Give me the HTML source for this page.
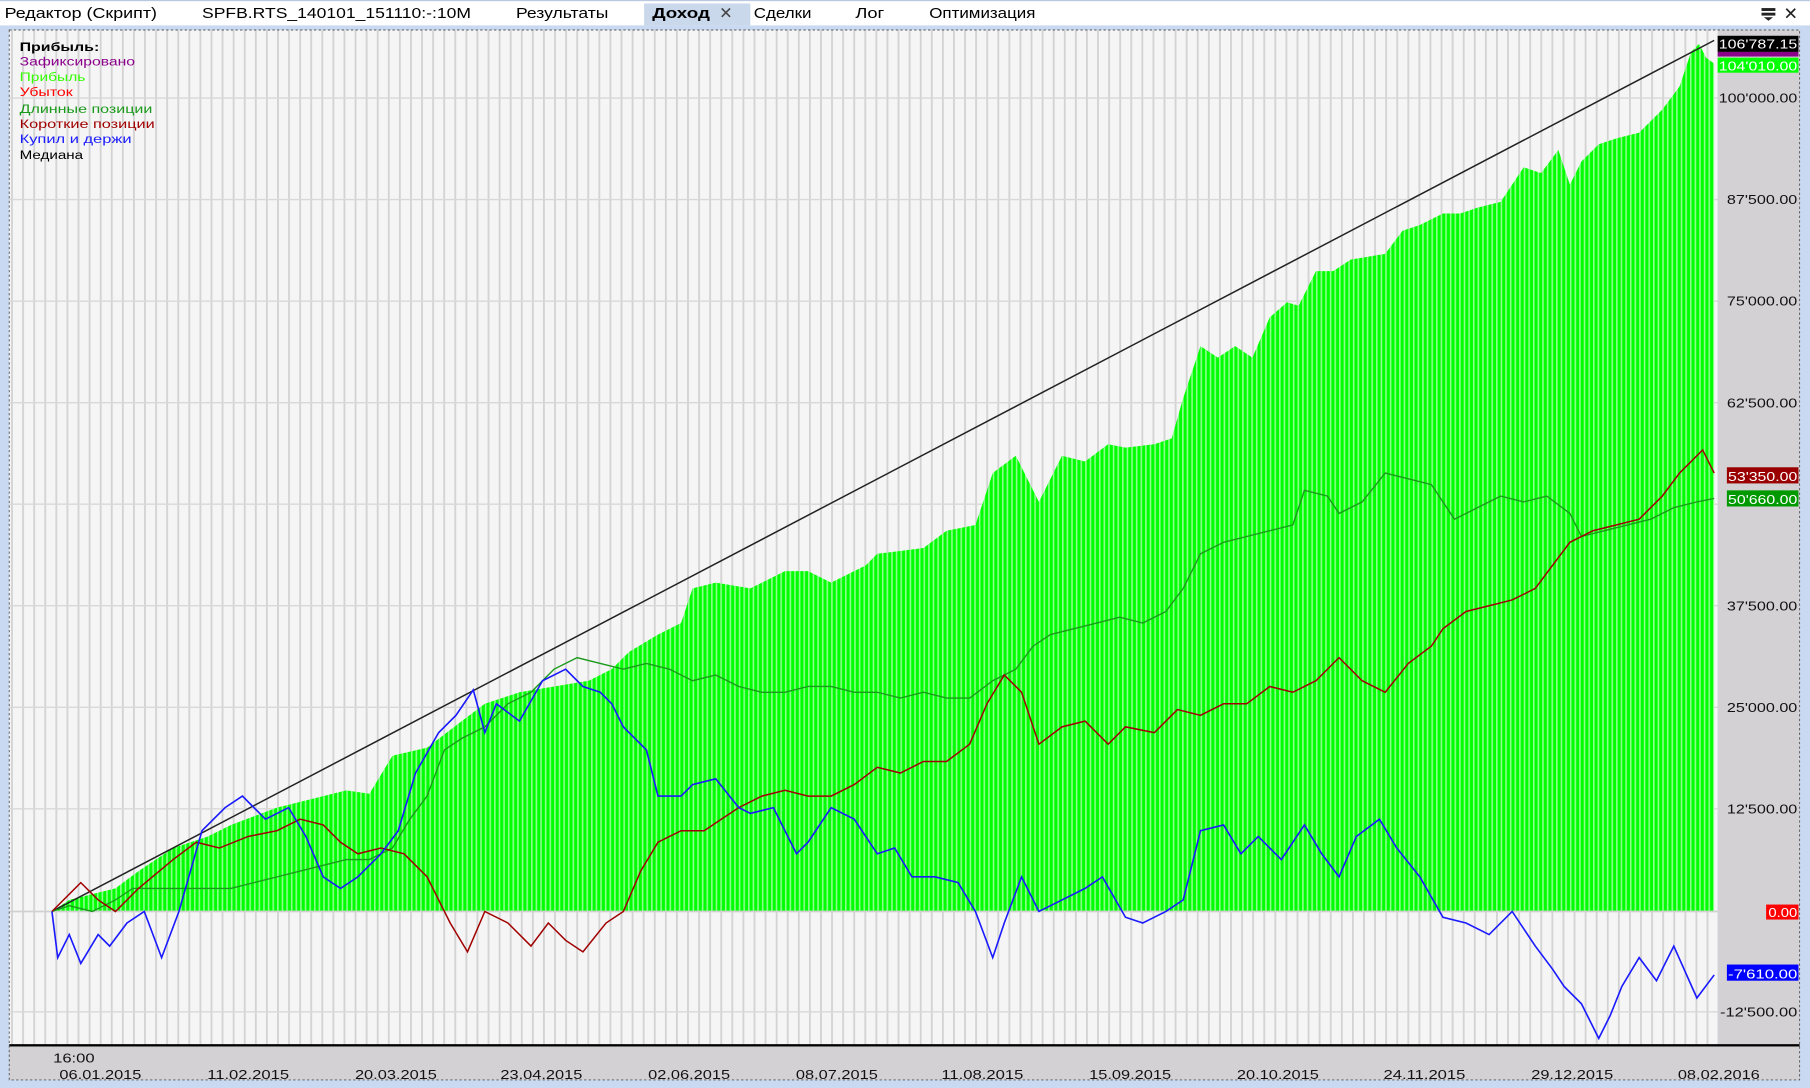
<!DOCTYPE html>
<html><head><meta charset="utf-8"><style>
html,body{margin:0;padding:0;width:1810px;height:1088px;overflow:hidden;background:#c9d9f1}
svg{display:block}
</style></head><body>
<svg width="1810" height="1088" viewBox="0 0 1568 943" preserveAspectRatio="none" xmlns="http://www.w3.org/2000/svg" font-family="Liberation Sans, DejaVu Sans, sans-serif">
<defs>
<pattern id="vg" x="0" y="0" width="9.6" height="10" patternUnits="userSpaceOnUse">
<rect x="0" y="0" width="1.6" height="10" fill="#d3d3d3"/>
</pattern>
<pattern id="gb" x="0" y="0" width="4" height="10" patternUnits="userSpaceOnUse">
<rect width="4" height="10" fill="#00ff00"/>
<rect x="0" width="1.4" height="10" fill="#8cff8c"/>
</pattern>
</defs>
<rect x="0" y="0" width="1568" height="943" fill="#c9d9f1"/>
<rect x="0" y="0" width="1568" height="22" fill="#ffffff"/>
<rect x="0" y="0" width="1568" height="1" fill="#b8c8e0"/>
<rect x="558" y="3" width="92" height="19" fill="#cad8ec"/>
<g font-size="13" fill="#000" lengthAdjust="spacingAndGlyphs">
<text x="4" y="15.5" textLength="132" lengthAdjust="spacingAndGlyphs">Редактор (Скрипт)</text>
<text x="175" y="15.5" textLength="233" lengthAdjust="spacingAndGlyphs">SPFB.RTS_140101_151110:-:10M</text>
<text x="447" y="15.5" textLength="80" lengthAdjust="spacingAndGlyphs">Результаты</text>
<text x="565" y="15.5" font-weight="bold" textLength="50" lengthAdjust="spacingAndGlyphs">Доход</text>
<text x="623" y="16" fill="#444" font-size="14">✕</text>
<text x="653" y="15.5" textLength="50" lengthAdjust="spacingAndGlyphs">Сделки</text>
<text x="741" y="15.5" textLength="25" lengthAdjust="spacingAndGlyphs">Лог</text>
<text x="805" y="15.5" textLength="92" lengthAdjust="spacingAndGlyphs">Оптимизация</text>
</g>
<g fill="#222">
<rect x="1526" y="7" width="12" height="2.5"/><rect x="1526" y="11" width="12" height="2.5"/>
<path d="M1528 15 L1536 15 L1532 18 Z"/>
</g>
<text x="1545" y="17" font-size="15" fill="#222">✕</text>
<rect x="8" y="26" width="1480" height="880" fill="#f5f5f5"/>
<rect x="8" y="26" width="1480" height="880" fill="url(#vg)"/>
<g stroke="#d8d8d8" stroke-width="1.2">
<line x1="8" y1="85" x2="1488" y2="85"/><line x1="8" y1="173" x2="1488" y2="173"/>
<line x1="8" y1="261" x2="1488" y2="261"/><line x1="8" y1="349" x2="1488" y2="349"/>
<line x1="8" y1="437" x2="1488" y2="437"/><line x1="8" y1="525" x2="1488" y2="525"/>
<line x1="8" y1="613" x2="1488" y2="613"/><line x1="8" y1="701" x2="1488" y2="701"/>
<line x1="8" y1="877" x2="1488" y2="877"/>
</g>
<polygon fill="url(#gb)" points="45,790 60,780 80,775 100,770 120,755 150,735 180,725 200,715 240,700 260,695 280,690 300,685 320,688 340,655 370,648 400,625 420,610 450,600 480,595 510,590 530,580 545,565 570,550 590,540 600,510 620,505 650,510 680,495 700,495 720,505 750,490 760,480 800,475 820,460 845,455 860,410 880,395 900,435 920,395 940,400 960,385 975,388 1000,385 1015,380 1025,345 1040,300 1055,310 1070,300 1085,310 1100,275 1115,262 1125,265 1140,235 1155,235 1170,225 1200,220 1215,200 1230,195 1250,185 1265,185 1280,180 1300,175 1320,145 1335,150 1350,130 1360,160 1370,140 1385,125 1400,120 1420,115 1430,105 1440,95 1455,75 1465,45 1472,38 1478,50 1485,55 1485,790"/>
<line x1="8" y1="790" x2="1488" y2="790" stroke="#d0d0d0" stroke-width="1.5"/>
<line x1="45" y1="790" x2="1485" y2="35" stroke="#222" stroke-width="1.3"/>
<polyline fill="none" stroke="#1a9a1a" stroke-width="1.2" points="45,790 60,785 80,790 100,780 115,770 150,770 200,770 220,765 240,760 260,755 280,750 300,745 320,745 340,735 355,710 370,690 385,650 400,640 420,630 440,610 460,600 480,580 500,570 520,575 540,580 560,575 580,580 600,590 620,585 640,595 660,600 680,600 700,595 720,595 740,600 760,600 780,605 800,600 820,605 840,605 860,590 880,580 895,560 910,550 930,545 950,540 970,535 990,540 1010,530 1025,510 1040,480 1060,470 1080,465 1100,460 1120,455 1130,425 1150,430 1160,445 1180,435 1200,410 1220,415 1240,420 1260,450 1280,440 1300,430 1320,435 1340,430 1360,445 1370,465 1390,460 1410,455 1430,450 1450,440 1470,435 1485,432"/>
<polyline fill="none" stroke="#a00000" stroke-width="1.3" points="45,790 70,765 85,780 100,790 120,770 150,745 170,730 190,735 215,725 240,720 260,710 280,715 295,730 310,740 330,735 350,740 370,760 390,800 405,825 420,790 440,800 460,820 475,800 490,815 505,825 525,800 540,790 555,755 570,730 590,720 610,720 625,710 640,700 660,690 680,685 700,690 720,690 740,680 760,665 780,670 800,660 820,660 840,645 855,610 870,585 885,600 900,645 920,630 940,625 960,645 975,630 1000,635 1020,615 1040,620 1060,610 1080,610 1100,595 1120,600 1140,590 1160,570 1180,590 1200,600 1220,575 1240,560 1250,545 1270,530 1290,525 1310,520 1330,510 1345,490 1360,470 1380,460 1400,455 1420,450 1440,430 1455,410 1475,390 1485,410"/>
<polyline fill="none" stroke="#1a1aff" stroke-width="1.4" points="45,790 50,830 60,810 70,835 85,810 95,820 110,800 125,790 140,830 155,790 175,720 195,700 210,690 230,710 250,700 265,725 280,760 295,770 310,760 330,740 345,720 360,670 380,635 395,620 410,598 420,635 430,610 450,625 470,590 490,580 505,595 520,600 530,610 540,630 560,650 570,690 590,690 600,680 620,675 640,700 650,705 670,700 690,740 700,730 720,700 740,710 760,740 775,735 790,760 810,760 830,765 845,790 860,830 870,800 885,760 900,790 920,780 940,770 955,760 975,795 990,800 1010,790 1025,780 1040,720 1060,715 1075,740 1090,725 1110,745 1130,715 1145,740 1160,760 1175,725 1195,710 1210,735 1230,760 1250,795 1270,800 1290,810 1310,790 1330,820 1345,840 1355,855 1370,870 1385,900 1395,880 1405,855 1420,830 1435,850 1450,820 1470,865 1485,845"/>
<g font-size="10">
<text x="17" y="44" font-weight="bold" fill="#000" textLength="69" lengthAdjust="spacingAndGlyphs">Прибыль:</text>
<text x="17" y="57" fill="#8b008b" textLength="100" lengthAdjust="spacingAndGlyphs">Зафиксировано</text>
<text x="17" y="70" fill="#33ff00" textLength="57" lengthAdjust="spacingAndGlyphs">Прибыль</text>
<text x="17" y="83" fill="#ff0000" textLength="46" lengthAdjust="spacingAndGlyphs">Убыток</text>
<text x="17" y="98" fill="#1a9a1a" textLength="115" lengthAdjust="spacingAndGlyphs">Длинные позиции</text>
<text x="17" y="111" fill="#a00000" textLength="117" lengthAdjust="spacingAndGlyphs">Короткие позиции</text>
<text x="17" y="124" fill="#1a1aff" textLength="97" lengthAdjust="spacingAndGlyphs">Купил и держи</text>
<text x="17" y="138" fill="#000" textLength="55" lengthAdjust="spacingAndGlyphs">Медиана</text>
</g>
<rect x="1488" y="26" width="71" height="880" fill="#d4d1d4"/>
<g font-size="11" fill="#111">
<text x="1489" y="89" textLength="68" lengthAdjust="spacingAndGlyphs">100'000.00</text>
<text x="1496" y="177" textLength="61" lengthAdjust="spacingAndGlyphs">87'500.00</text>
<text x="1496" y="265" textLength="61" lengthAdjust="spacingAndGlyphs">75'000.00</text>
<text x="1496" y="353" textLength="61" lengthAdjust="spacingAndGlyphs">62'500.00</text>
<text x="1496" y="529" textLength="61" lengthAdjust="spacingAndGlyphs">37'500.00</text>
<text x="1496" y="617" textLength="61" lengthAdjust="spacingAndGlyphs">25'000.00</text>
<text x="1496" y="705" textLength="61" lengthAdjust="spacingAndGlyphs">12'500.00</text>
<text x="1490" y="881" textLength="67" lengthAdjust="spacingAndGlyphs">-12'500.00</text>
</g>
<rect x="1488" y="31" width="70" height="14" fill="#000"/>
<rect x="1488" y="45" width="70" height="4" fill="#8b008b"/>
<rect x="1488" y="50" width="70" height="13" fill="#00ff00"/>
<rect x="1496" y="405" width="62" height="14" fill="#9a0000"/>
<rect x="1496" y="425" width="62" height="14" fill="#009a00"/>
<rect x="1530" y="784" width="28" height="13" fill="#ff0000"/>
<rect x="1496" y="836" width="62" height="14" fill="#0000ff"/>
<g font-size="11" fill="#fff">
<text x="1489" y="42" textLength="68" lengthAdjust="spacingAndGlyphs">106'787.15</text>
<text x="1489" y="61" textLength="68" lengthAdjust="spacingAndGlyphs">104'010.00</text>
<text x="1497" y="417" textLength="60" lengthAdjust="spacingAndGlyphs">53'350.00</text>
<text x="1497" y="437" textLength="60" lengthAdjust="spacingAndGlyphs">50'660.00</text>
<text x="1532" y="795" textLength="25" lengthAdjust="spacingAndGlyphs">0.00</text>
<text x="1497" y="848" textLength="60" lengthAdjust="spacingAndGlyphs">-7'610.00</text>
</g>
<rect x="8" y="906" width="1551" height="30" fill="#d4d1d4"/>
<rect x="8" y="905" width="1551" height="2" fill="#000"/>
<g font-size="11" fill="#111" text-anchor="middle">
<text x="64" y="921" textLength="36" lengthAdjust="spacingAndGlyphs">16:00</text>
<text x="87" y="935" textLength="71" lengthAdjust="spacingAndGlyphs">06.01.2015</text>
<text x="215" y="935" textLength="71" lengthAdjust="spacingAndGlyphs">11.02.2015</text>
<text x="343" y="935" textLength="71" lengthAdjust="spacingAndGlyphs">20.03.2015</text>
<text x="469" y="935" textLength="71" lengthAdjust="spacingAndGlyphs">23.04.2015</text>
<text x="597" y="935" textLength="71" lengthAdjust="spacingAndGlyphs">02.06.2015</text>
<text x="725" y="935" textLength="71" lengthAdjust="spacingAndGlyphs">08.07.2015</text>
<text x="851" y="935" textLength="71" lengthAdjust="spacingAndGlyphs">11.08.2015</text>
<text x="979" y="935" textLength="71" lengthAdjust="spacingAndGlyphs">15.09.2015</text>
<text x="1107" y="935" textLength="71" lengthAdjust="spacingAndGlyphs">20.10.2015</text>
<text x="1234" y="935" textLength="71" lengthAdjust="spacingAndGlyphs">24.11.2015</text>
<text x="1362" y="935" textLength="71" lengthAdjust="spacingAndGlyphs">29.12.2015</text>
<text x="1489" y="935" textLength="71" lengthAdjust="spacingAndGlyphs">08.02.2016</text>
</g>
<rect x="8" y="26" width="1551" height="910" fill="none" stroke="#555" stroke-width="0.8" stroke-dasharray="2,2"/>
</svg>
</body></html>
